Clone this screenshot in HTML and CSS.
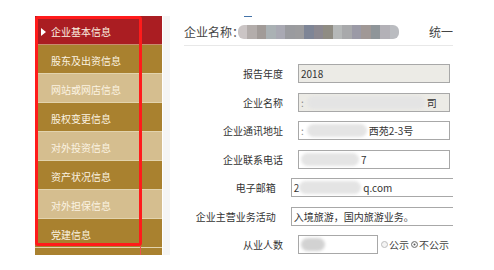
FILE: index.html
```html
<!DOCTYPE html>
<html>
    <head lang="zh">
        <meta charset="utf-8">
        <title>企业年报 - 企业基本信息</title>
        <link rel="stylesheet" href="styles.css">
    </head>
    <body>
        <div class="page">
            <div class="sidebar">
                <ul class="menu">
                    <li class="menu-item active">企业基本信息</li>
                    <li class="menu-item">股东及出资信息</li>
                    <li class="menu-item light">网站或网店信息</li>
                    <li class="menu-item">股权变更信息</li>
                    <li class="menu-item light">对外投资信息</li>
                    <li class="menu-item">资产状况信息</li>
                    <li class="menu-item light">对外担保信息</li>
                    <li class="menu-item">党建信息</li>
                    <li class="menu-item"></li>
                </ul>
                <div class="highlight"></div>
            </div>
            <div class="divider"></div>
            <div class="content">
                <div class="title">
                    <span class="tick"></span>
                    <span class="title-label">企业名称：</span>
                    <span class="mosaic">
                        <i style="background:#cbc5c5"></i><i style="background:#b3adab"></i><i style="background:#a19b98"></i><i style="background:#aab1b4"></i><i style="background:#a9a9b3"></i><i style="background:#9a9b9f"></i><i style="background:#9c9c9e"></i><i style="background:#7e8596"></i><i style="background:#8b8890"></i><i style="background:#8f8c83"></i><i style="background:#b5b8b8"></i><i style="background:#a8a9ab"></i><i style="background:#9b9aa6"></i><i style="background:#a09896"></i><i style="background:#8f9599"></i><i style="background:#b3b1b7"></i><i style="background:#babcc0"></i>
                    </span>
                    <span class="title-extra">统一</span>
                </div>
                <div class="form">
                    <div class="row">
                        <span class="label">报告年度</span>
                        <div class="field readonly">2018</div>
                    </div>
                    <div class="row">
                        <span class="label">企业名称</span>
                        <div class="field readonly"><span class="mark">:</span><span class="smudge" style="width:118px"></span><span>司</span></div>
                    </div>
                    <div class="row">
                        <span class="label">企业通讯地址</span>
                        <div class="field"><span class="mark">:</span><span class="smudge" style="width:60px"></span><span>西苑2-3号</span></div>
                    </div>
                    <div class="row">
                        <span class="label">企业联系电话</span>
                        <div class="field"><span class="smudge" style="width:58px"></span><span>7</span></div>
                    </div>
                    <div class="row">
                        <span class="label">电子邮箱</span>
                        <div class="field wide"><span>2</span><span class="smudge" style="width:62px"></span><span>q.com</span></div>
                    </div>
                    <div class="row">
                        <span class="label">企业主营业务活动</span>
                        <div class="field wide">入境旅游，国内旅游业务。</div>
                    </div>
                    <div class="row staff">
                        <span class="label">从业人数</span>
                        <div class="field short"><span class="smudge dark" style="width:24px"></span></div>
                        <span class="radio"><span class="dot"></span>公示</span>
                        <span class="radio"><span class="dot checked"></span>不公示</span>
                    </div>
                </div>
            </div>
        </div>
    </body>
</html>
```

FILE: styles.css
```css
body {
    margin: 0;
    background: #ffffff;
    font-family: "Noto Sans CJK SC", "Liberation Sans", sans-serif;
}
.page {
    display: flex;
    height: 239px;
    padding: 16px 0 0 35px;
    overflow: hidden;
}
.sidebar {
    position: relative;
    width: 127px;
    height: 239px;
    overflow: hidden;
}
.menu {
    list-style: none;
    margin: 0;
    padding: 0;
}
.menu-item {
    position: relative;
    height: 28px;
    line-height: 32px;
    padding-left: 16px;
    border-bottom: 1px solid #e2d3ad;
    background: #a9812f;
    color: #fbf3e2;
    font-size: 10px;
    white-space: nowrap;
}
.menu-item.light {
    background: #d5be8f;
}
.menu-item.active {
    background: #aa1d22;
    border-bottom-color: #c98a70;
}
.menu-item.active::before {
    content: "";
    position: absolute;
    left: 6px;
    top: 12px;
    border-left: 5px solid #ffffff;
    border-top: 4px solid transparent;
    border-bottom: 4px solid transparent;
}
.highlight {
    position: absolute;
    left: 0;
    top: 0;
    width: 101px;
    height: 224px;
    border: 3px solid #ff1b1b;
    border-radius: 3px;
}
.highlight::after {
    content: "";
    position: absolute;
    left: 102px;
    top: 227px;
    width: 1px;
    height: 12px;
    background: #f05050;
}
.divider {
    width: 7px;
    margin-left: 1px;
    background: #f5f5f5;
}
.content {
    width: 269px;
    padding-left: 14px;
    overflow: hidden;
}
.title {
    position: relative;
    display: flex;
    align-items: center;
    height: 27px;
    padding-top: 2px;
    border-bottom: 1px solid #e8e8e8;
    color: #444444;
    font-size: 12px;
    white-space: nowrap;
}
.tick {
    position: absolute;
    left: 60px;
    top: -1px;
    width: 8px;
    height: 2px;
    background: #4473a8;
}
.mosaic {
    display: flex;
    height: 14px;
    margin-left: -6px;
    border-radius: 6px;
    overflow: hidden;
    filter: blur(0.4px);
}
.mosaic i {
    width: 9.7px;
    height: 14px;
}
.title-extra {
    margin-left: 30px;
}
.form {
    padding-top: 18px;
}
.row {
    display: flex;
    align-items: center;
    height: 19px;
    margin-bottom: 9.5px;
    font-size: 10px;
    color: #333333;
    white-space: nowrap;
}
.row.staff {
    margin-top: 3px;
}
.label {
    width: 99px;
    margin-right: 15px;
    text-align: right;
}
.field {
    display: flex;
    align-items: center;
    box-sizing: border-box;
    width: 152px;
    height: 19px;
    padding-left: 2px;
    border: 1px solid #a8a8a8;
    background: #ffffff;
    overflow: hidden;
}
.field.readonly {
    background: #ecebe6;
}
.field.wide {
    width: 175px;
    border-right: none;
}
.field.short {
    width: 80px;
}
.mark {
    color: #888888;
    margin-right: 3px;
}
.smudge {
    height: 13px;
    margin-right: 2px;
    border-radius: 7px;
    background: #e4e4e4;
    filter: blur(1.5px);
}
.smudge.dark {
    background: #d2d2d2;
}
.radio {
    display: flex;
    align-items: center;
    margin-left: 3px;
    color: #444444;
}
.radio + .radio {
    margin-left: 2px;
}
.dot {
    box-sizing: border-box;
    width: 7px;
    height: 7px;
    margin-right: 1px;
    border: 1px solid #bdbdbd;
    border-radius: 50%;
    background: #f4f4f4;
}
.dot.checked {
    border-color: #8c8c8c;
    background: #555555;
    box-shadow: inset 0 0 0 1.5px #ffffff;
}
```
